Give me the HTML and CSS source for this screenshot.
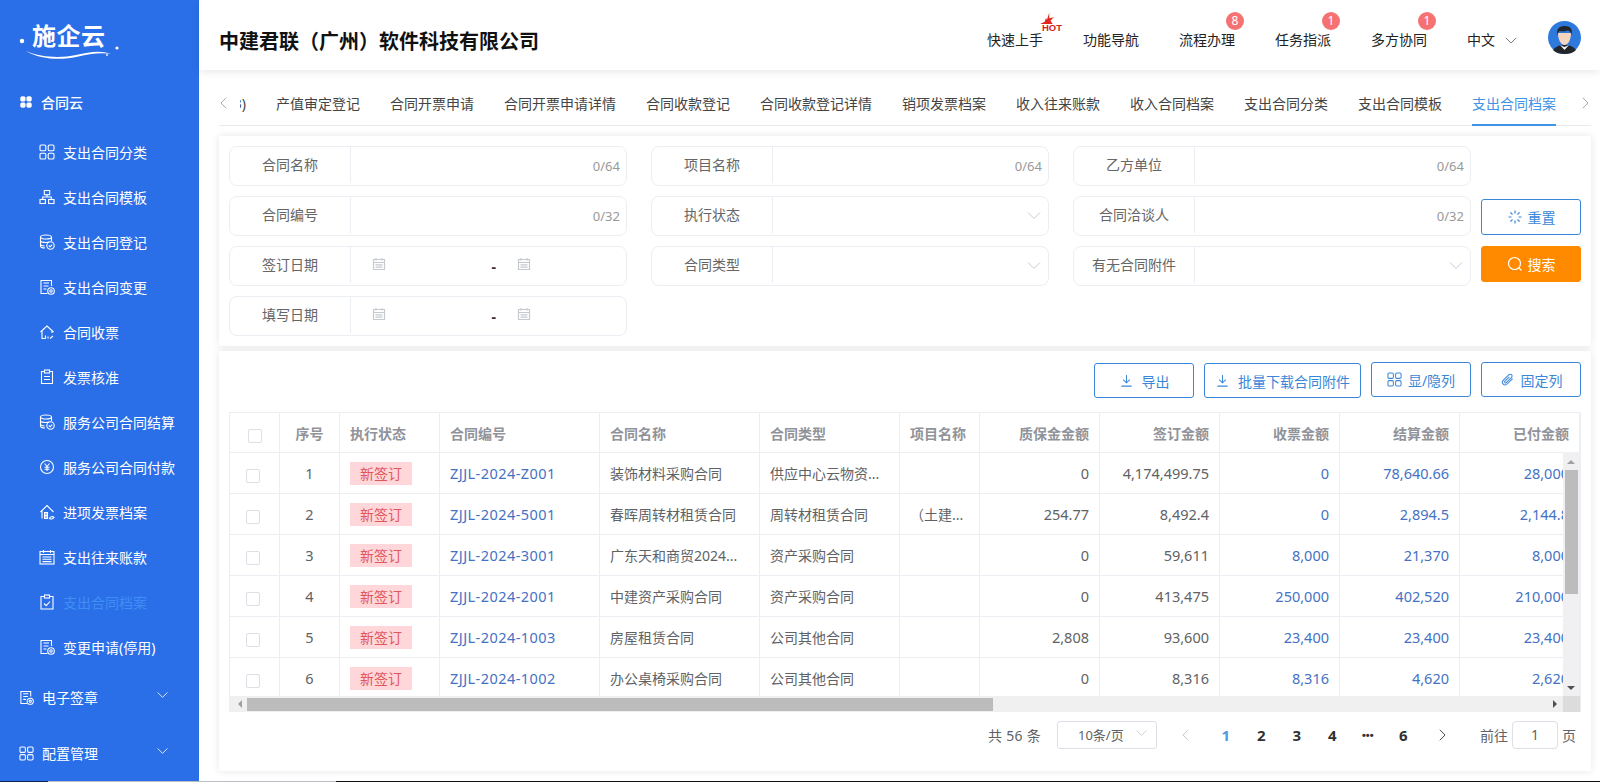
FILE: index.html
```html
<!DOCTYPE html>
<html lang="zh-CN">

<head>
    <meta charset="UTF-8">
    <title>施企云</title>
    <link rel="stylesheet" href="styles.css">
</head>

<body>
    <svg class="sprite" xmlns="http://www.w3.org/2000/svg">
        <symbol id="i-grid" viewBox="0 0 16 16"><rect x="1" y="1" width="5.800" height="5.800" rx="1.300"/><rect x="9.200" y="1" width="5.800" height="5.800" rx="1.300"/><rect x="1" y="9.200" width="5.800" height="5.800" rx="1.300"/><rect x="9.200" y="9.200" width="5.800" height="5.800" rx="1.300"/></symbol>
        <symbol id="i-org" viewBox="0 0 16 16"><rect x="5.300" y="1.500" width="5.400" height="4.200"/><rect x="1" y="10.500" width="5.400" height="4"/><rect x="9.600" y="10.500" width="5.400" height="4"/><path d="M8 5.700V8M3.700 10.500V8h8.600v2.500"/></symbol>
        <symbol id="i-db" viewBox="0 0 16 16"><ellipse cx="7" cy="3" rx="5.500" ry="2"/><path d="M1.500 3v9c0 1.200 2 2 4.500 2M1.500 6.500c0 1.200 2.500 2 5.500 2 1 0 2-.1 3-.4M1.500 10c0 1.200 2 1.900 4 2M12.500 3v4"/><circle cx="11.500" cy="11.500" r="3.700"/><path d="M9.800 11.500l1.300 1.300 2.100-2.200"/></symbol>
        <symbol id="i-doc" viewBox="0 0 16 16"><path d="M12.500 7V1.500H2v13h6.500M4.500 4h5.500M4.500 7h5M4.500 10h3"/><circle cx="12" cy="12" r="3.300"/><circle cx="12" cy="12" r="1.200"/></symbol>
        <symbol id="i-home" viewBox="0 0 16 16"><path d="M1.500 8L8 2l6.500 6M3 6.800V14.500h3.500M13 6.800V9"/><path d="M6.500 14.500v-3M9 14.500v-2M11 14.500l3-2.500"/></symbol>
        <symbol id="i-bars" viewBox="0 0 16 16"><path d="M1.500 8L8 1.500 14.500 8M3 6.800V14.500M5.500 8.500h3v6h-3zM5.500 11.500h3M7 8.500v6M10.500 14.500c.5-2 3-2.500 4.500-1-1 1.500-3 2-4.500 1z"/></symbol>
        <symbol id="i-clip" viewBox="0 0 16 16"><path d="M5.500 2.500H2.500v12h11v-12h-3"/><rect x="5.500" y="1" width="5" height="3"/><path d="M5 7.500h6M5 10.500h6"/></symbol>
        <symbol id="i-yen" viewBox="0 0 16 16"><circle cx="8" cy="8" r="6.500"/><path d="M5.500 4.500L8 7.500l2.500-3M8 7.500V12M5.500 8.300h5M5.500 10.300h5"/></symbol>
        <symbol id="i-cal" viewBox="0 0 16 16"><rect x="1" y="2.500" width="14" height="12.500"/><path d="M1 5.500h14M4.500 1v3M11.500 1v3M3.500 8h9M3.500 10.300h9M3.500 12.600h9"/></symbol>
        <symbol id="i-check" viewBox="0 0 16 16"><path d="M5.500 2.500H2v12.500h12V2.500h-3.500"/><rect x="5.500" y="1" width="5" height="3"/><path d="M5 9.500l2.200 2.200L11 7.500"/></symbol>
        <symbol id="i-down" viewBox="0 0 16 16"><path d="M2 5.500l6 6 6-6"/></symbol>
        <symbol id="i-date" viewBox="0 0 14 14"><path d="M1.500 2.500h11v10h-11zM1.500 5.500h11M4 1v2.500M10 1v2.500M3.500 7.800h7M3.500 10.200h7"/></symbol>
        <symbol id="i-save" viewBox="0 0 16 16"><path d="M8 2v8.500M4.500 7L8 10.500 11.500 7M2.500 14h11"/></symbol>
    </svg>

    <div class="app">
        <aside class="sidebar">
            <div class="logo">
                <svg class="logo-mark" viewBox="0 0 120 62"><circle cx="22" cy="41" r="2.200"/><circle cx="117" cy="48" r="1.600"/><circle cx="107" cy="55" r=".9"/><path d="M26 51c16 7 36 7 50 4s24-5 35-1c-10-2-22 0-35 3s-36 3-50-6z"/></svg>
                <span class="logo-text">施企云</span>
            </div>
            <div class="nav-group">
                <svg class="ic-top ic-solid"><use href="#i-grid"/></svg>
                合同云
            </div>
            <ul class="nav-sub">
                <li><svg class="ic"><use href="#i-grid"/></svg>支出合同分类</li>
                <li><svg class="ic"><use href="#i-org"/></svg>支出合同模板</li>
                <li><svg class="ic"><use href="#i-db"/></svg>支出合同登记</li>
                <li><svg class="ic"><use href="#i-doc"/></svg>支出合同变更</li>
                <li><svg class="ic"><use href="#i-home"/></svg>合同收票</li>
                <li><svg class="ic"><use href="#i-clip"/></svg>发票核准</li>
                <li><svg class="ic"><use href="#i-db"/></svg>服务公司合同结算</li>
                <li><svg class="ic"><use href="#i-yen"/></svg>服务公司合同付款</li>
                <li><svg class="ic"><use href="#i-bars"/></svg>进项发票档案</li>
                <li><svg class="ic"><use href="#i-cal"/></svg>支出往来账款</li>
                <li class="active"><svg class="ic"><use href="#i-check"/></svg>支出合同档案</li>
                <li><svg class="ic"><use href="#i-doc"/></svg>变更申请(停用)</li>
            </ul>
            <div class="nav-top"><svg class="ic-top"><use href="#i-doc"/></svg>电子签章<svg class="nav-arrow"><use href="#i-down"/></svg></div>
            <div class="nav-top"><svg class="ic-top"><use href="#i-grid"/></svg>配置管理<svg class="nav-arrow"><use href="#i-down"/></svg></div>
        </aside>

        <div class="main">
            <header class="topbar">
                <h1>中建君联（广州）软件科技有限公司</h1>
                <nav class="topnav">
                    <span class="topitem">快速上手
                        <span class="hot">
                            <svg viewBox="0 0 14 12"><path d="M1 10l4-2 1-3 1 1 2-6 0 5 4-1-3 3 2 3z"/></svg>
                            <b>HOT</b>
                        </span>
                    </span>
                    <span class="topitem">功能导航</span>
                    <span class="topitem">流程办理<i class="badge">8</i></span>
                    <span class="topitem">任务指派<i class="badge">1</i></span>
                    <span class="topitem">多方协同<i class="badge">1</i></span>
                    <span class="topitem lang">中文<svg class="lang-arrow"><use href="#i-down"/></svg></span>
                    <svg class="avatar" viewBox="0 0 33 33">
                        <circle class="av-bg" cx="16.500" cy="16.500" r="16.500"/>
                        <path class="av-suit" d="M5 29c3-4 7-5 11.500-5S25 25 28 29c-3 3-7 4-11.500 4S8 32 5 29z"/>
                        <path class="av-skin" d="M10 12c0 7 3 12 6.500 12S23 19 23 12z"/>
                        <path class="av-shirt" d="M12 24l4.500 5 4.500-5-4.500 2z"/>
                        <path class="av-suit" d="M9.500 14C8 7 12 5 17 5c5 0 8 3 6.500 9-.5-3-2-4.500-4-4.500-3 1-7 1-8 .5-1 1-1.500 2.500-2 4z"/>
                    </svg>
                </nav>
            </header>

            <div class="tabs">
                <svg class="tab-arrow tab-prev"><use href="#i-down"/></svg>
                <div class="tab-list">
                    <span class="tab tab-cut"><span>3)</span></span>
                    <span class="tab">产值审定登记</span>
                    <span class="tab">合同开票申请</span>
                    <span class="tab">合同开票申请详情</span>
                    <span class="tab">合同收款登记</span>
                    <span class="tab">合同收款登记详情</span>
                    <span class="tab">销项发票档案</span>
                    <span class="tab">收入往来账款</span>
                    <span class="tab">收入合同档案</span>
                    <span class="tab">支出合同分类</span>
                    <span class="tab">支出合同模板</span>
                    <span class="tab tab-on">支出合同档案</span>
                </div>
                <svg class="tab-arrow tab-next"><use href="#i-down"/></svg>
            </div>

            <section class="panel search-panel">
                <div class="fields">
                    <div class="field"><label>合同名称</label><div class="val"><em>0/64</em></div></div>
                    <div class="field"><label>项目名称</label><div class="val"><em>0/64</em></div></div>
                    <div class="field"><label>乙方单位</label><div class="val"><em>0/64</em></div></div>
                    <div class="field"><label>合同编号</label><div class="val"><em>0/32</em></div></div>
                    <div class="field"><label>执行状态</label><div class="val"><svg class="sel-arrow"><use href="#i-down"/></svg></div></div>
                    <div class="field"><label>合同洽谈人</label><div class="val"><em>0/32</em></div></div>
                    <div class="field"><label>签订日期</label><div class="val dates"><svg class="date"><use href="#i-date"/></svg><span class="dash">-</span><svg class="date"><use href="#i-date"/></svg></div></div>
                    <div class="field"><label>合同类型</label><div class="val"><svg class="sel-arrow"><use href="#i-down"/></svg></div></div>
                    <div class="field"><label>有无合同附件</label><div class="val"><svg class="sel-arrow"><use href="#i-down"/></svg></div></div>
                    <div class="field"><label>填写日期</label><div class="val dates"><svg class="date"><use href="#i-date"/></svg><span class="dash">-</span><svg class="date"><use href="#i-date"/></svg></div></div>
                </div>
                <div class="search-btns">
                    <button class="btn">
                        <svg class="btn-ic big" viewBox="0 0 16 16"><path d="M8 1.500v3M8 11.500v3M1.500 8h3M11.500 8h3M3.400 3.400l2.100 2.100M10.500 10.500l2.100 2.100M3.400 12.600l2.100-2.100M10.500 5.500l2.100-2.100"/></svg>重置
                    </button>
                    <button class="btn btn-orange">
                        <svg class="btn-ic big" viewBox="0 0 16 16"><circle cx="7.500" cy="7.500" r="6"/><path d="M11.800 11.800l2.700 2.700"/></svg>搜索
                    </button>
                </div>
            </section>

            <section class="panel table-panel">
                <div class="toolbar">
                    <button class="btn tool low"><svg class="btn-ic"><use href="#i-save"/></svg>导出</button>
                    <button class="btn tool low wide"><svg class="btn-ic"><use href="#i-save"/></svg>批量下载合同附件</button>
                    <button class="btn tool"><svg class="btn-ic"><use href="#i-grid"/></svg>显/隐列</button>
                    <button class="btn tool">
                        <svg class="btn-ic" viewBox="0 0 16 16"><path d="M13.500 7l-5.800 5.800c-1.300 1.300-3.200 1.300-4.300.2s-1.100-3 .2-4.300l5.700-5.700c.9-.9 2.200-.9 3-.1s.8 2.100-.1 3L6.800 11.300c-.5.500-1.200.5-1.600.1s-.4-1.100.1-1.600L10 5.200"/></svg>固定列
                    </button>
                </div>

                <div class="grid-wrap">
                    <table class="grid">
                        <colgroup>
                            <col class="c50"><col class="c60"><col class="c100"><col class="c160"><col class="c160"><col class="c140"><col class="c80"><col class="c120"><col class="c120"><col class="c120"><col class="c120"><col class="c120">
                        </colgroup>
                        <thead>
                            <tr>
                                <th class="mid"><span class="cb"></span></th>
                                <th class="mid">序号</th>
                                <th>执行状态</th>
                                <th>合同编号</th>
                                <th>合同名称</th>
                                <th>合同类型</th>
                                <th>项目名称</th>
                                <th class="right">质保金金额</th>
                                <th class="right">签订金额</th>
                                <th class="right">收票金额</th>
                                <th class="right">结算金额</th>
                                <th class="right">已付金额</th>
                            </tr>
                        </thead>
                        <tbody>
                            <tr>
                                <td class="mid"><span class="cb"></span></td><td class="mid digit">1</td><td><span class="tag">新签订</span></td>
                                <td class="link code">ZJJL-2024-Z001</td><td>装饰材料采购合同</td><td>供应中心云物资...</td><td></td>
                                <td class="num">0</td><td class="num">4,174,499.75</td><td class="num link">0</td><td class="num link">78,640.66</td><td class="num link">28,000</td>
                            </tr>
                            <tr>
                                <td class="mid"><span class="cb"></span></td><td class="mid digit">2</td><td><span class="tag">新签订</span></td>
                                <td class="link code">ZJJL-2024-5001</td><td>春晖周转材租赁合同</td><td>周转材租赁合同</td><td>（土建...</td>
                                <td class="num">254.77</td><td class="num">8,492.4</td><td class="num link">0</td><td class="num link">2,894.5</td><td class="num link">2,144.8</td>
                            </tr>
                            <tr>
                                <td class="mid"><span class="cb"></span></td><td class="mid digit">3</td><td><span class="tag">新签订</span></td>
                                <td class="link code">ZJJL-2024-3001</td><td>广东天和商贸2024...</td><td>资产采购合同</td><td></td>
                                <td class="num">0</td><td class="num">59,611</td><td class="num link">8,000</td><td class="num link">21,370</td><td class="num link">8,000</td>
                            </tr>
                            <tr>
                                <td class="mid"><span class="cb"></span></td><td class="mid digit">4</td><td><span class="tag">新签订</span></td>
                                <td class="link code">ZJJL-2024-2001</td><td>中建资产采购合同</td><td>资产采购合同</td><td></td>
                                <td class="num">0</td><td class="num">413,475</td><td class="num link">250,000</td><td class="num link">402,520</td><td class="num link">210,000</td>
                            </tr>
                            <tr>
                                <td class="mid"><span class="cb"></span></td><td class="mid digit">5</td><td><span class="tag">新签订</span></td>
                                <td class="link code">ZJJL-2024-1003</td><td>房屋租赁合同</td><td>公司其他合同</td><td></td>
                                <td class="num">2,808</td><td class="num">93,600</td><td class="num link">23,400</td><td class="num link">23,400</td><td class="num link">23,400</td>
                            </tr>
                            <tr>
                                <td class="mid"><span class="cb"></span></td><td class="mid digit">6</td><td><span class="tag">新签订</span></td>
                                <td class="link code">ZJJL-2024-1002</td><td>办公桌椅采购合同</td><td>公司其他合同</td><td></td>
                                <td class="num">0</td><td class="num">8,316</td><td class="num link">8,316</td><td class="num link">4,620</td><td class="num link">2,620</td>
                            </tr>
                        </tbody>
                    </table>
                    <!-- scrollbars sit over the table -->
                    <div class="vbar"><span class="arr arr-up"></span><span class="thumb-v"></span><span class="arr arr-down"></span></div>
                    <div class="hbar"><span class="arr arr-left"></span><span class="thumb-h"></span><span class="arr arr-right"></span><span class="corner"></span></div>
                </div>

                <div class="pager">
                    <span class="total">共 56 条</span>
                    <span class="size">10条/页<svg class="size-arrow"><use href="#i-down"/></svg></span>
                    <svg class="pg pg-prev"><use href="#i-down"/></svg>
                    <b class="pg pg-on">1</b>
                    <b class="pg">2</b>
                    <b class="pg">3</b>
                    <b class="pg">4</b>
                    <b class="pg pg-more">•••</b>
                    <b class="pg">6</b>
                    <svg class="pg pg-next"><use href="#i-down"/></svg>
                    <span class="goto">前往</span>
                    <span class="goto-box">1</span>
                    <span class="goto-end">页</span>
                </div>
            </section>
        </div>
    </div>
    <div class="strip"><span class="s1"></span><span class="s2"></span><span class="s3"></span></div>
</body>

</html>
```
FILE: styles.css
```css
* {
    box-sizing: border-box;
}

html,
body {
    margin: 0;
    height: 782px;
    overflow: hidden;
    background: #fff;
}

body {
    font-family: "Noto Sans", "Noto Sans CJK SC", sans-serif;
    font-size: 14px;
    color: #606266;
}

.sprite {
    display: none;
}

svg {
    fill: none;
    stroke: currentColor;
    stroke-width: 1;
}

.app {
    display: flex;
    height: 781px;
}

.strip {
    display: flex;
    height: 1px;
}

.s1 {
    width: 48px;
    background: #0d2350;
}

.s2 {
    width: 288px;
    background: #b9bec6;
}

.s3 {
    flex: 1;
    background: #111;
}

/* sidebar */
.sidebar {
    width: 199px;
    flex: none;
    height: 781px;
    overflow: hidden;
    background: #2b6fe8;
    color: #fff;
}

.logo {
    position: relative;
    height: 80px;
    padding: 19px 0 0 32px;
}

.logo-text {
    font-size: 24px;
    line-height: 34px;
    font-weight: 700;
    letter-spacing: .5px;
}

.logo-mark {
    position: absolute;
    left: 0;
    top: 0;
    width: 120px;
    height: 62px;
    fill: #fff;
    stroke: none;
}

.nav-group {
    display: flex;
    align-items: center;
    height: 44px;
    padding-left: 20px;
    font-weight: 500;
}

.nav-sub {
    list-style: none;
    margin: 5px 0 0;
    padding: 0;
}

.nav-sub li {
    display: flex;
    align-items: center;
    height: 45px;
    padding-left: 39px;
}

.nav-sub .active {
    color: #3f8ef4;
}

.nav-sub .active .ic {
    color: #fff;
}

.ic {
    width: 16px;
    height: 16px;
    margin-right: 8px;
    flex: none;
    stroke-width: 1.100;
}

.ic-top {
    width: 15px;
    height: 15px;
    margin-right: 8px;
    flex: none;
    stroke-width: 1.100;
}

.ic-solid {
    width: 12px;
    height: 12px;
    margin-right: 9px;
    fill: #fff;
}

.nav-top {
    display: flex;
    align-items: center;
    height: 56px;
    padding-left: 19px;
}

.nav-arrow {
    width: 13px;
    height: 13px;
    margin-left: 58px;
    margin-top: -6px;
}

/* top bar */
.main {
    flex: 1;
    min-width: 0;
    padding: 0 9px 0 20px;
    position: relative;
}

.topbar {
    display: flex;
    align-items: center;
    justify-content: space-between;
    height: 70px;
    margin: 0 -9px 0 -20px;
    padding: 10px 19px 0 20px;
    box-shadow: 0 2px 8px rgba(0, 0, 0, .09);
}

.topbar h1 {
    margin: 0;
    font-size: 20px;
    font-weight: 700;
    color: #111;
}

.topnav {
    display: flex;
    align-items: center;
    color: #222;
}

.topitem {
    position: relative;
    margin-right: 40px;
    line-height: 20px;
}

.badge {
    position: absolute;
    right: -9px;
    top: -18px;
    width: 18px;
    height: 18px;
    border-radius: 9px;
    background: #f47272;
    color: #fff;
    font-style: normal;
    font-size: 12px;
    line-height: 18px;
    text-align: center;
}

.hot {
    position: absolute;
    left: 52px;
    top: -18px;
    width: 24px;
    height: 20px;
    color: #d9211c;
}

.hot svg {
    position: absolute;
    left: 0;
    top: 0;
    width: 16px;
    height: 15px;
    fill: #e0261d;
    stroke: none;
}

.hot b {
    position: absolute;
    left: 3px;
    top: 11px;
    font-size: 9.500px;
    line-height: 9px;
    font-weight: 800;
    font-family: "Liberation Sans", sans-serif;
}

.lang {
    display: flex;
    align-items: center;
    margin-right: 0;
}

.lang-arrow {
    width: 14px;
    height: 14px;
    margin-left: 9px;
    color: #666;
}

.avatar {
    width: 33px;
    height: 33px;
    margin: -6px 0 0 30px;
    stroke: none;
}

.av-bg {
    fill: #2d79dc;
}

.av-suit {
    fill: #23252c;
}

.av-skin {
    fill: #f6d5bf;
}

.av-shirt {
    fill: #f4f4f4;
}

/* tabs */
.tabs {
    position: relative;
    height: 44px;
    margin-top: 12px;
    border-bottom: 1px solid #e8eaee;
}

.tab-list {
    display: flex;
    position: absolute;
    left: 21px;
    top: 0;
}

.tab {
    padding: 0 15px;
    height: 44px;
    line-height: 43px;
    color: #444;
    white-space: nowrap;
}

.tab-cut {
    width: 6px;
    padding: 0;
    margin-right: 15px;
    overflow: hidden;
    display: flex;
    justify-content: flex-end;
}

.tab-on {
    position: relative;
    color: #4093e6;
}

.tab-on::after {
    content: "";
    position: absolute;
    left: 15px;
    right: 15px;
    bottom: 0;
    height: 2px;
    background: #4093e6;
}

.tab-arrow {
    position: absolute;
    top: 14px;
    width: 14px;
    height: 14px;
    color: #9a9a9a;
}

.tab-prev {
    left: -2px;
    transform: rotate(90deg);
}

.tab-next {
    right: -1px;
    transform: rotate(-90deg);
}

/* search panel */
.panel {
    background: #fff;
    box-shadow: 0 0 8px rgba(0, 0, 0, .1);
}

.search-panel {
    display: flex;
    height: 210px;
    margin-top: 10px;
    padding: 10px;
}

.fields {
    display: grid;
    grid-template-columns: repeat(3, 398px);
    grid-auto-rows: 40px;
    gap: 10px 24px;
}

.field {
    display: flex;
    border: 1px solid #ebeef2;
    border-radius: 8px;
}

.field label {
    width: 121px;
    height: 36px;
    flex: none;
    border-right: 1px solid #ebeef2;
    line-height: 36px;
    text-align: center;
    color: #666;
}

.val {
    flex: 1;
    display: flex;
    align-items: center;
    justify-content: flex-end;
    padding-right: 6px;
}

.val em {
    font-style: normal;
    font-size: 13px;
    color: #999;
}

.sel-arrow {
    width: 16px;
    height: 16px;
    margin-top: -2px;
    color: #c8ccd3;
}

.dates {
    justify-content: flex-start;
    padding-left: 21px;
}

.date {
    width: 14px;
    height: 14px;
    margin-top: -4px;
    color: #c5c9d0;
    stroke-width: 1.200;
}

.dash {
    width: 131px;
    padding-right: 21px;
    text-align: right;
    color: #333;
    font-weight: 700;
}

.search-btns {
    display: flex;
    flex-direction: column;
    gap: 11px;
    margin-left: 10px;
    padding-top: 53px;
}

.btn {
    display: flex;
    align-items: center;
    justify-content: center;
    width: 100px;
    height: 36px;
    padding: 0;
    border: 1px solid #3a87d8;
    border-radius: 3px;
    background: #fff;
    color: #3a87d8;
    font: inherit;
}

.btn-orange {
    background: #ff8a00;
    border-color: #ff8a00;
    color: #fff;
}

.btn-ic {
    width: 15px;
    height: 15px;
    margin-right: 6px;
    stroke-width: 1.100;
}

.btn-ic.big {
    width: 16px;
    height: 16px;
    margin-right: 5px;
    stroke-width: 1.200;
}

/* table panel */
.table-panel {
    height: 420px;
    margin-top: 5px;
    padding: 0 10px;
}

.toolbar {
    display: flex;
    justify-content: flex-end;
    gap: 10px;
    height: 61px;
    padding-top: 11px;
}

.tool {
    height: 35px;
}

.low {
    margin-top: 1px;
}

.low .btn-ic {
    margin-right: 8px;
}

.wide {
    width: 157px;
}

.grid-wrap {
    position: relative;
    width: 1352px;
    height: 300px;
    overflow: hidden;
    border-top: 1px solid #ebeef2;
    border-left: 1px solid #ebeef2;
    border-right: 1px solid #ebeef2;
}

.grid {
    width: 1350px;
    table-layout: fixed;
    border-collapse: separate;
    border-spacing: 0;
}

.c50 { width: 50px; }
.c60 { width: 60px; }
.c80 { width: 80px; }
.c100 { width: 100px; }
.c120 { width: 120px; }
.c140 { width: 140px; }
.c160 { width: 160px; }

.grid th,
.grid td {
    padding: 0 10px;
    border-right: 1px solid #ebeef2;
    border-bottom: 1px solid #ebeef2;
    text-align: left;
    white-space: nowrap;
    overflow: hidden;
}

.grid th {
    height: 40px;
    font-weight: 700;
    color: #909399;
}

.grid td {
    height: 41px;
}

.grid .mid {
    text-align: center;
}

.grid .right,
.grid .num {
    text-align: right;
}

.grid .num,
.grid .digit {
    font-size: 14.500px;
}

.grid .link {
    color: #4472c4;
}

.grid .code {
    font-size: 14.500px;
    letter-spacing: .45px;
}

.tag {
    display: inline-block;
    width: 62px;
    height: 23px;
    background: #ffd6d9;
    color: #e0565b;
    line-height: 23px;
    text-align: center;
}

.cb {
    display: inline-block;
    width: 14px;
    height: 14px;
    margin-top: 4px;
    vertical-align: middle;
    border: 1px solid #dcdfe6;
    border-radius: 2px;
    background: #fff;
}

td .cb {
    margin-right: 3px;
}

.vbar {
    position: absolute;
    right: 0;
    top: 39px;
    bottom: 16px;
    width: 17px;
    background: #f0f0f2;
}

.thumb-v {
    position: absolute;
    left: 2px;
    top: 18px;
    width: 13px;
    height: 124px;
    background: #bcbcbc;
}

.hbar {
    position: absolute;
    left: 0;
    right: 0;
    bottom: 0;
    height: 16px;
    background: #f0f0f0;
}

.thumb-h {
    position: absolute;
    left: 17px;
    top: 2px;
    width: 746px;
    height: 13px;
    background: #bcbcbc;
}

.corner {
    position: absolute;
    right: 0;
    top: 0;
    width: 17px;
    height: 16px;
    background: #dcdcdc;
}

.arr {
    position: absolute;
    width: 0;
    height: 0;
    border: 4px solid transparent;
}

.arr-up {
    left: 4px;
    top: 4px;
    border-bottom-color: #a0a0a0;
}

.arr-down {
    left: 4px;
    bottom: 2px;
    border-top-color: #505050;
}

.arr-left {
    left: 4px;
    top: 4px;
    border-right-color: #a0a0a0;
}

.arr-right {
    right: 19px;
    top: 4px;
    border-left-color: #505050;
}

/* pager */
.pager {
    display: flex;
    align-items: center;
    justify-content: flex-end;
    height: 28px;
    margin-top: 9px;
    padding-right: 5px;
}

.total {
    margin-right: 16px;
    letter-spacing: .3px;
}

.size {
    position: relative;
    width: 100px;
    height: 28px;
    padding-left: 20px;
    margin-right: 22px;
    border: 1px solid #dcdfe6;
    border-radius: 3px;
    font-size: 13px;
    line-height: 26px;
}

.size-arrow {
    position: absolute;
    right: 8px;
    top: 4px;
    width: 13px;
    height: 13px;
    color: #c0c4cc;
}

.pg {
    width: 35.500px;
    text-align: center;
    color: #303133;
    font-size: 15px;
    font-weight: 700;
}

.pg-more {
    font-size: 11px;
    font-family: "Liberation Sans", sans-serif;
}

svg.pg {
    width: 14px;
    height: 14px;
}

.pg-on {
    color: #4a9be0;
}

.pg-prev {
    margin-right: 15px;
    color: #c0c4cc;
    transform: rotate(90deg);
}

.pg-next {
    margin: 0 15px 0 14px;
    color: #303133;
    transform: rotate(-90deg);
}

.goto {
    margin-left: 16px;
}

.goto-box {
    width: 46px;
    height: 28px;
    margin: 0 4px;
    border: 1px solid #dcdfe6;
    border-radius: 4px;
    line-height: 26px;
    text-align: center;
}
```
